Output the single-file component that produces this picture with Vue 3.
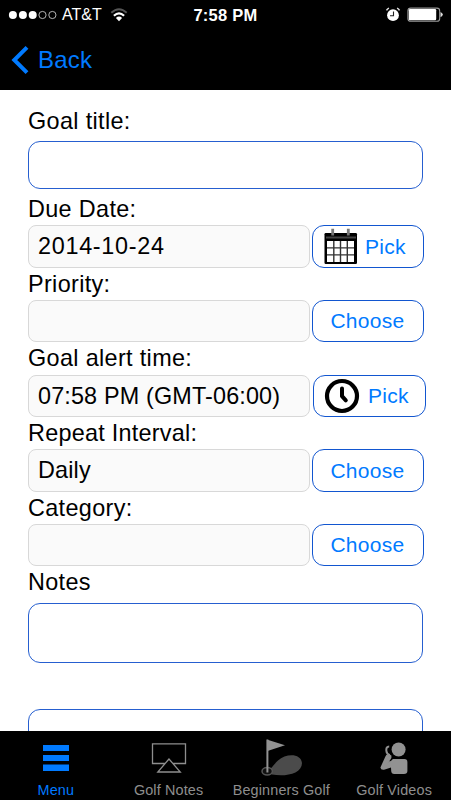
<script setup>
const rows = [
  { label: 'Due Date:', value: '2014-10-24', action: 'Pick', icon: 'calendar', cls: 'due' },
  { label: 'Priority:', value: '', action: 'Choose', cls: 'priority' },
  { label: 'Goal alert time:', value: '07:58 PM (GMT-06:00)', action: 'Pick', icon: 'clock', cls: 'alert' },
  { label: 'Repeat Interval:', value: 'Daily', action: 'Choose', cls: 'repeat' },
  { label: 'Category:', value: '', action: 'Choose', cls: 'category' }
]
const tabs = ['Menu', 'Golf Notes', 'Beginners Golf', 'Golf Videos']
</script>

<template>
  <div class="screen">
    <header>
      <div class="status">
        <div class="carrier">
          <svg width="50" height="12" viewBox="0 0 50 12">
            <g fill="#fff"><circle cx="4.9" cy="6" r="4"/><circle cx="14.9" cy="6" r="4"/><circle cx="24.7" cy="6" r="4"/></g>
            <g fill="none" stroke="#ddd" stroke-width=".8"><circle cx="34.5" cy="6" r="3.6"/><circle cx="44.4" cy="6" r="3.6"/></g>
          </svg>
          <span>AT&amp;T</span>
          <svg class="wifi" width="18" height="14" viewBox="0 0 18 14">
            <path d="M1.3 4.8Q9-2.2 16.7 4.8" fill="none" stroke="#555" stroke-width="2"/>
            <path d="M3.9 7.8Q9 2.8 14.1 7.8" fill="none" stroke="#fff" stroke-width="2.2"/>
            <path d="M5.9 10Q9 7.1 12.1 10L9 13.2Z" fill="#fff"/>
          </svg>
        </div>
        <div class="time">7:58 PM</div>
        <div class="indicators">
          <svg width="16" height="16" viewBox="0 0 16 16">
            <circle cx="8" cy="8.2" r="5.9" fill="#fff"/>
            <path d="M1.5 3.4Q2.4 1.6 4 1.1M12 1.1Q13.6 1.6 14.5 3.4" fill="none" stroke="#ddd" stroke-width="1.5"/>
            <path d="M8.5 4.6V8.8H5" fill="none" stroke="#222" stroke-width="1.1"/>
          </svg>
          <svg width="37" height="16" viewBox="0 0 37 16">
            <rect x=".9" y="1.1" width="31.8" height="13.2" rx="2.8" fill="none" stroke="#999" stroke-width="1.1"/>
            <rect x="1.8" y="2.1" width="27.4" height="11.2" rx="1.2" fill="#fff"/>
            <path d="M33.5 5Q35.8 6 35.8 7.6Q35.8 9.4 33.5 10.3Z" fill="#ddd"/>
          </svg>
        </div>
      </div>
      <div class="back">
        <svg width="18" height="30" viewBox="0 0 18 30"><path d="M16 2.3L3.3 15L16 27.7" fill="none" stroke="#007aff" stroke-width="4"/></svg>
        <span>Back</span>
      </div>
    </header>

    <main>
      <div class="label first">Goal title:</div>
      <div class="input title"></div>
      <section v-for="row in rows" :key="row.label" :class="['row', row.cls]">
        <div class="label">{{ row.label }}</div>
        <div class="controls">
          <div class="value">{{ row.value }}</div>
          <button>
            <svg v-if="row.icon === 'calendar'" width="34" height="37" viewBox="0 0 34 37">
              <rect x=".5" y="5" width="32.5" height="31" rx="1.2" fill="#000"/>
              <path d="M2 9.5H32" stroke="#444" stroke-width="2"/>
              <rect x="3" y="13" width="27" height="21" fill="#fff"/>
              <path d="M9.8 13V34M16.5 13V34M23.3 13V34M3 19.9H30M3 26.9H30" stroke="#333" stroke-width="1.4"/>
              <path d="M8.7.8V7.5M24.3.8V7.5" stroke="#777" stroke-width="2.8"/>
            </svg>
            <svg v-if="row.icon === 'clock'" width="36" height="36" viewBox="0 0 36 36">
              <circle cx="18" cy="18" r="15" fill="none" stroke="#000" stroke-width="4.2"/>
              <path d="M18 10.5V18.2L21.8 22.3" fill="none" stroke="#000" stroke-width="4" stroke-linecap="round" stroke-linejoin="round"/>
            </svg>
            <span>{{ row.action }}</span>
          </button>
        </div>
      </section>
      <div class="label notes-label">Notes</div>
      <div class="input notes"></div>
      <div class="input extra"></div>
    </main>

    <nav>
      <div v-for="(tab, i) in tabs" :key="tab" :class="['tab', { active: i === 0 }]">
        <svg v-if="i === 0" width="44" height="46" viewBox="0 0 44 46"><path d="M9 14H35V20H9ZM9 24H35V30H9ZM9 33.5H35V40H9Z" fill="#007aff"/></svg>
        <svg v-else-if="i === 1" width="44" height="46" viewBox="0 0 44 46">
          <path d="M18 32.5H5.5V12.8H38.5V32.5H26M22 28L10.8 41H33.3Z" fill="none" stroke="#8e8e8e" stroke-width="1.3"/>
        </svg>
        <svg v-else-if="i === 2" width="44" height="46" viewBox="0 0 44 46">
          <path d="M7 39.5C12 38 13 34 18 29.5C26 22 41 22 42 32C42 43 25 46 12 43.5Z" fill="#4b4b4b"/>
          <ellipse cx="7.2" cy="40.2" rx="5.2" ry="3.7" fill="#111" stroke="#555" stroke-width="1.5"/>
          <path d="M7.4 8.5V41.5" stroke="#929292" stroke-width="2"/><path d="M7.5 8.8L25 14.2L7.5 20Z" fill="#929292"/>
        </svg>
        <svg v-else width="44" height="46" viewBox="0.6 0 44 46">
          <g fill="#929292"><circle cx="26.2" cy="18.5" r="7"/><path d="M20.5 28H32Q35 28 35 31.2V40Q35 43 31.5 43H21.8Q19 43 18.8 40L18.6 36.5L12.5 38.5Q8.4 39.5 8 36.5L13 25.5Q14 22.5 17 23.5L19 24.5V27L14.5 34Z"/></g>
          <path d="M16.8 15.5Q13.4 15.5 14 20Q14.2 23 17.5 24.2M12.8 34.7L18.3 30.5" fill="none" stroke="#929292" stroke-width="2"/>
        </svg>
        <span>{{ tab }}</span>
      </div>
    </nav>
  </div>
</template>

<style>
body { margin: 0; overflow: hidden; }
</style>

<style scoped>
* { box-sizing: border-box; }
.screen { width: 451px; height: 800px; display: flex; flex-direction: column; background: #fff; color: #000; font-family: "Liberation Sans", Arial, sans-serif; overflow: hidden; }
svg { display: block; flex: none; }
header { height: 90px; flex: none; background: #000; color: #fff; }
.status { height: 30px; display: grid; grid-template-columns: 180px 1fr 180px; align-items: center; padding: 0 8px; }
.carrier { display: flex; align-items: center; font-size: 16px; letter-spacing: 0; }
.carrier span { margin-left: 4px; }
.wifi { margin-left: 8px; }
.time { font-size: 16.5px; font-weight: bold; text-align: center; letter-spacing: .25px; white-space: nowrap; }
.indicators { display: flex; justify-content: flex-end; gap: 6px; margin-right: -1px; }
.back { height: 60px; display: flex; align-items: center; padding-left: 11px; color: #007aff; font-size: 24px; letter-spacing: .2px; }
.back span { margin-left: 9px; }
main { height: 641px; flex: none; padding: 15px 0 0 28px; overflow: hidden; }
.label { height: 32px; line-height: 32px; font-size: 23.4px; letter-spacing: .35px; white-space: nowrap; }
.first { height: 36px; line-height: 33px; }
.input { width: 395px; border: 1px solid #265fd0; border-radius: 12px; background: #fff; }
.title { height: 48px; }
.due { margin-top: 4px; }
.controls { display: flex; gap: 2px; }
.value { width: 282px; height: 42px; flex: none; padding-left: 9px; border: 1px solid #d8d8d8; border-radius: 8px; background: #fafafa; font-size: 23.4px; line-height: 40px; letter-spacing: .15px; white-space: nowrap; }
.due .value { letter-spacing: .7px; }
button { width: 112px; height: 42px; flex: none; display: flex; align-items: center; justify-content: center; padding: 0 1px 0 0; border: 1px solid #1256d0; border-radius: 12px; background: #fff; color: #007aff; font: 21px/40px "Liberation Sans", Arial, sans-serif; letter-spacing: .3px; }
.due button, .alert button { justify-content: flex-start; padding-left: 11px; }
.due button span { margin-left: 7px; }
.due .value, .due button, .repeat .value, .repeat button { height: 43px; }
.alert .label { height: 33px; }
.repeat .label { letter-spacing: .25px; }
.alert .controls { gap: 3px; }
.alert button { width: 113px; padding-left: 10px; }
.alert button span { margin-left: 8px; }
.notes-label { height: 37px; }
.notes { height: 60px; }
.extra { height: 60px; margin-top: 46px; }
nav { height: 69px; flex: none; display: grid; grid-template-columns: repeat(4, 1fr); background: #000; }
.tab { display: flex; flex-direction: column; align-items: center; color: #8e8e8e; font-size: 14.4px; letter-spacing: .15px; white-space: nowrap; }
.tab span { line-height: 17px; margin-top: 5px; margin-left: -1px; }
.tab.active { color: #007aff; }
</style>
